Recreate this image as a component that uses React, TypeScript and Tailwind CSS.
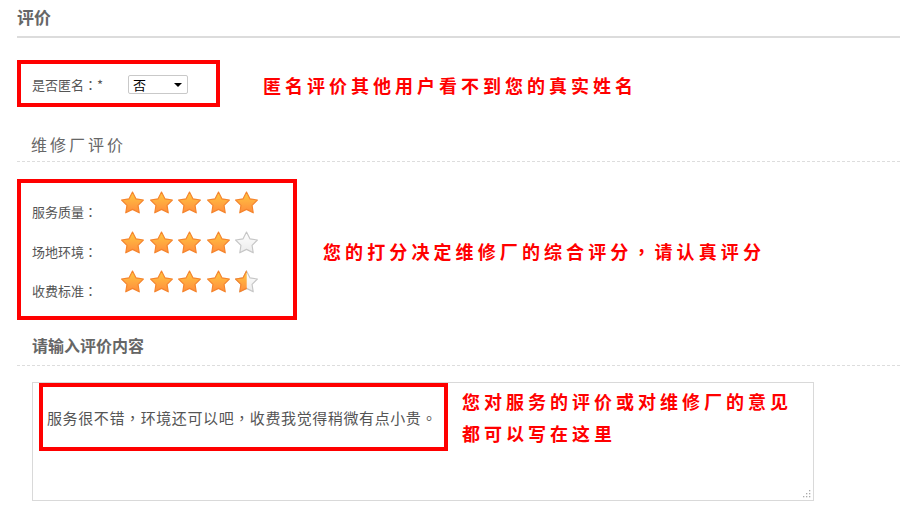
import React from 'react';

const CJK = '"Noto Sans CJK SC", "Noto Sans", sans-serif';

// full-width punctuation centred in its cell, as in the screenshot
function P({ c }: { c: string }) {
  return <span style={{ fontFamily: '"Noto Sans CJK TC", sans-serif' }}>{c}</span>;
}

type Fill = 'full' | 'empty' | 'half';

function Star({ fill, id }: { fill: Fill; id: string }) {
  const d =
    'M12 2L15.29 8.47L22.46 9.6L17.33 14.73L18.47 21.9L12 18.6L5.53 21.9L6.67 14.73L1.54 9.6L8.71 8.47Z';
  return (
    <svg width="25" height="25" viewBox="0 0 24 24" className="block">
      <defs>
        <linearGradient id={`on-${id}`} x1="0" y1="0" x2="0" y2="1">
          <stop offset="0%" stopColor="#ffc842" />
          <stop offset="100%" stopColor="#ff8c3d" />
        </linearGradient>
        <linearGradient id={`off-${id}`} x1="0" y1="0" x2="0" y2="1">
          <stop offset="0%" stopColor="#ffffff" />
          <stop offset="100%" stopColor="#ebebeb" />
        </linearGradient>
        <clipPath id={`half-${id}`}>
          <rect x="0" y="0" width="12.2" height="24" />
        </clipPath>
      </defs>
      {fill !== 'full' && (
        <path d={d} fill={`url(#off-${id})`} stroke="#c6c6c6" strokeWidth="1.1" strokeLinejoin="round" />
      )}
      {fill !== 'empty' && (
        <path
          d={d}
          fill={`url(#on-${id})`}
          stroke="#f5842c"
          strokeWidth="1.1"
          strokeLinejoin="round"
          clipPath={fill === 'half' ? `url(#half-${id})` : undefined}
        />
      )}
    </svg>
  );
}

const ratings: { label: string; stars: Fill[] }[] = [
  { label: '服务质量', stars: ['full', 'full', 'full', 'full', 'full'] },
  { label: '场地环境', stars: ['full', 'full', 'full', 'full', 'empty'] },
  { label: '收费标准', stars: ['full', 'full', 'full', 'full', 'half'] },
];

export default function App() {
  return (
    <div className="w-[900px] h-[514px] bg-white pl-[17px] overflow-hidden" style={{ fontFamily: CJK }}>
      {/* 标题 */}
      <div className="h-[38px] border-b-2 border-[#dcdcdc] pt-[5px]">
        <h1 className="text-[17px] leading-[24px] font-bold text-[#666]">评价</h1>
      </div>

      {/* 是否匿名 */}
      <div className="mt-[22px] flex items-center">
        <div className="w-[203px] h-[47px] border-4 border-[#ff0000] flex items-center pl-[11px] pt-[2px]">
          <span className="text-[13px] text-[#555] w-[96px]">
            是否匿名<P c="：" />*
          </span>
          <div className="w-[60px] h-[19px] border border-[#c9c9c9] rounded-[2px] flex items-center justify-between pl-[4px] pr-[5px]">
            <span className="text-[13px] leading-none text-black">否</span>
            <span className="w-0 h-0 border-l-[4px] border-r-[4px] border-t-[4px] border-l-transparent border-r-transparent border-t-black" />
          </div>
        </div>
        <p className="ml-[43px] mt-[3px] text-[18px] font-bold text-[#ff0000] tracking-[4px]">
          匿名评价其他用户看不到您的真实姓名
        </p>
      </div>

      {/* 维修厂评价 */}
      <div className="mt-[18px] pl-[14px] pt-[9px] h-[37px] border-b border-dashed border-[#dddddd]">
        <h2 className="text-[16px] leading-[20px] text-[#666] tracking-[3px]">维修厂评价</h2>
      </div>

      <div className="mt-[17px] flex items-center">
        <div className="w-[280px] h-[141px] border-4 border-[#ff0000] pl-[11px] pt-[7px] flex flex-col gap-[14.5px]">
          {ratings.map((r, ri) => (
            <div key={r.label} className="flex items-end h-[25px]">
              <span className="w-[88px] text-[13px] leading-[16px] text-[#555] translate-y-[5px]">
                {r.label}
                <P c="：" />
              </span>
              <div className="flex gap-[3.6px]">
                {r.stars.map((s, si) => (
                  <Star key={si} fill={s} id={`${ri}-${si}`} />
                ))}
              </div>
            </div>
          ))}
        </div>
        <p className="ml-[26px] mt-[3px] text-[18px] font-bold text-[#ff0000] tracking-[4.1px]">
          您的打分决定维修厂的综合评分<P c="，" />请认真评分
        </p>
      </div>

      {/* 请输入评价内容 */}
      <div className="mt-[15px] pl-[15px] h-[31px] border-b border-dashed border-[#dddddd]">
        <h2 className="text-[16px] leading-[20px] font-bold text-[#666]">请输入评价内容</h2>
      </div>

      <div className="mt-[16px] ml-[15px] w-[782px] h-[119px] border border-[#d9d9d9] relative flex pl-[6px]">
        <div className="w-[409px] h-[68px] border-4 border-[#ff0000] flex items-center pl-[4px] pt-[3px]">
          <span className="text-[15px] text-[#555] tracking-[0.6px] whitespace-nowrap">
            服务很不错<P c="，" />环境还可以吧<P c="，" />收费我觉得稍微有点小贵<P c="。" />
          </span>
        </div>
        <p className="ml-[14px] mt-[2px] text-[18px] leading-[32px] font-bold text-[#ff0000] tracking-[4px]">
          您对服务的评价或对维修厂的意见
          <br />
          都可以写在这里
        </p>
        <svg width="9" height="9" viewBox="0 0 9 9" className="absolute right-[2px] bottom-[2px]">
          <rect x="7" y="1" width="1.3" height="1.3" fill="#aaa" />
          <rect x="4" y="4" width="1.3" height="1.3" fill="#aaa" />
          <rect x="7" y="4" width="1.3" height="1.3" fill="#aaa" />
          <rect x="1" y="7" width="1.3" height="1.3" fill="#aaa" />
          <rect x="4" y="7" width="1.3" height="1.3" fill="#aaa" />
          <rect x="7" y="7" width="1.3" height="1.3" fill="#aaa" />
        </svg>
      </div>
    </div>
  );
}
